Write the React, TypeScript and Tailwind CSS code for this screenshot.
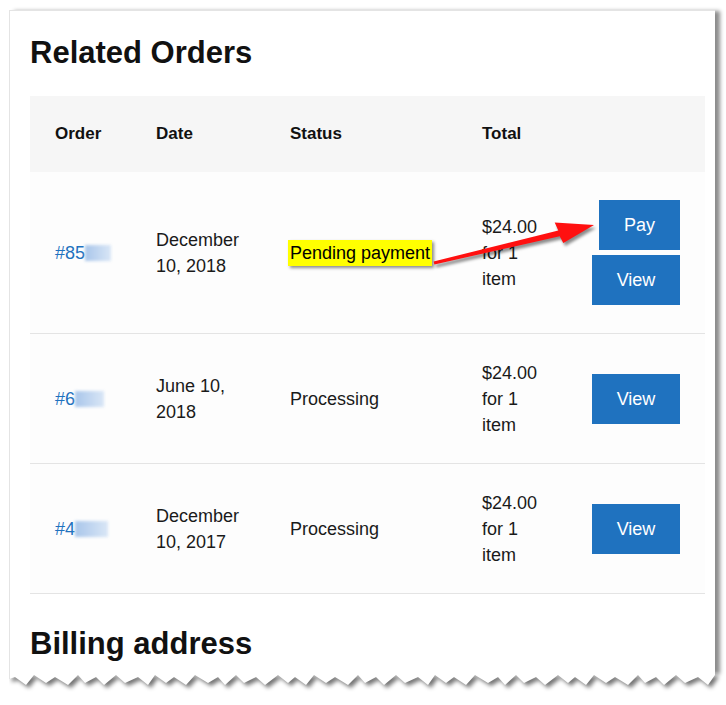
import React from "react";

type Row = {
  id: string;
  blur: number;
  date: string;
  status: string;
  pending?: boolean;
  height: string;
};

const rows: Row[] = [
  { id: "#85", blur: 26, date: "December 10, 2018", status: "Pending payment", pending: true, height: "h-[162px]" },
  { id: "#6", blur: 29, date: "June 10, 2018", status: "Processing", height: "h-[130px]" },
  { id: "#4", blur: 33, date: "December 10, 2017", status: "Processing", height: "h-[130px]" },
];

// jagged bottom of the torn screenshot
function tornPath(w: number) {
  const pts: string[] = [`0,0`, `${w},0`];
  let x = w;
  let i = 0;
  const list: [number, number][] = [];
  while (x > 0) {
    const up = i % 2 === 0;
    const y = up ? 2 + ((i * 13) % 4) : 9 + ((i * 7) % 4);
    list.push([x, y]);
    x -= 7 + ((i * 31) % 7);
    i++;
  }
  list.push([0, 6]);
  list.forEach(([px, py]) => pts.push(`${px},${py}`));
  return pts.join(" ");
}

function Button({ label, w }: { label: string; w: string }) {
  return (
    <button
      className={`flex h-[50px] ${w} items-center justify-center bg-[#1f72bf] text-[18px] text-white`}
    >
      {label}
    </button>
  );
}

export default function App() {
  const torn = tornPath(706);
  return (
    <div className="relative h-[705px] w-[726px] overflow-hidden bg-white font-['Liberation_Sans',Arial,sans-serif] text-[#1a1a1a]">
      <div className="ml-[9px] mt-[10px] w-[706px]">
        <div className="border-l border-t border-[#e4e4e4] bg-white pb-[14px] pl-[20px] pr-[10px] pt-[26px] shadow-[5px_1px_4px_rgba(0,0,0,0.45)]">
          <h2 className="text-[31px] font-bold leading-[31px] text-[#111]">Related Orders</h2>

          <div className="mt-[28px] text-[18px] leading-[26px]">
            <div className="grid h-[76px] grid-cols-[101px_134px_192px_1fr_auto] items-center bg-[#f6f6f6] px-[25px] text-[17px] font-bold text-[#111]">
              <div>Order</div>
              <div>Date</div>
              <div>Status</div>
              <div>Total</div>
              <div />
            </div>

            {rows.map((r) => (
              <div
                key={r.id}
                className={`grid ${r.height} grid-cols-[101px_134px_192px_1fr_auto] items-center border-b border-[#e4e4e4] bg-[#fdfdfd] px-[25px]`}
              >
                <div className="flex items-center text-[#1f72bf]">
                  <span>{r.id}</span>
                  <span
                    className="inline-block h-[16px] bg-gradient-to-r from-[#a9c6ea] to-[#d9e6f6] blur-[1.5px]"
                    style={{ width: r.blur }}
                  />
                </div>
                <div className="w-[105px]">{r.date}</div>
                <div>
                  {r.pending ? (
                    <span className="ml-[-2px] inline-block bg-[#ffff00] px-[2px] py-0 leading-[26px] text-black shadow-[2px_2px_3px_rgba(0,0,0,0.45)]">
                      {r.status}
                    </span>
                  ) : (
                    r.status
                  )}
                </div>
                <div className="w-[62px]">$24.00 for 1 item</div>
                <div className="flex flex-col items-end gap-[5px]">
                  {r.pending && <Button label="Pay" w="w-[81px]" />}
                  <Button label="View" w="w-[88px]" />
                </div>
              </div>
            ))}
          </div>

          <h2 className="mt-[34px] text-[31px] font-bold leading-[31px] text-[#111]">Billing address</h2>
        </div>
        <svg width="716" height="26" className="block" viewBox="0 0 716 26">
          <defs>
            <filter id="tornShadow" x="-5%" y="-50%" width="110%" height="200%">
              <feGaussianBlur stdDeviation="2" />
            </filter>
          </defs>
          <polygon points={torn} transform="translate(3,3)" fill="rgba(0,0,0,0.55)" filter="url(#tornShadow)" />
          <polygon points={torn} fill="#ffffff" />
          <line x1="0.5" y1="0" x2="0.5" y2="6" stroke="#e4e4e4" />
        </svg>
      </div>

      {/* red annotation arrow */}
      <svg className="absolute left-[430px] top-[212px]" width="175" height="60" viewBox="0 0 175 60">
        <defs>
          <filter id="arrowShadow" x="-10%" y="-30%" width="120%" height="160%">
            <feGaussianBlur stdDeviation="1.5" />
          </filter>
        </defs>
        <polygon
          points="3.6,49.5 128.3,18.4 124.7,10.6 164,13 133.3,31 129.7,24.2 4.4,52.5"
          transform="translate(2,3)"
          fill="rgba(0,0,0,0.45)"
          filter="url(#arrowShadow)"
        />
        <polygon
          points="3.6,49.5 128.3,18.4 124.7,10.6 164,13 133.3,31 129.7,24.2 4.4,52.5"
          fill="#ff1010"
        />
      </svg>
    </div>
  );
}
